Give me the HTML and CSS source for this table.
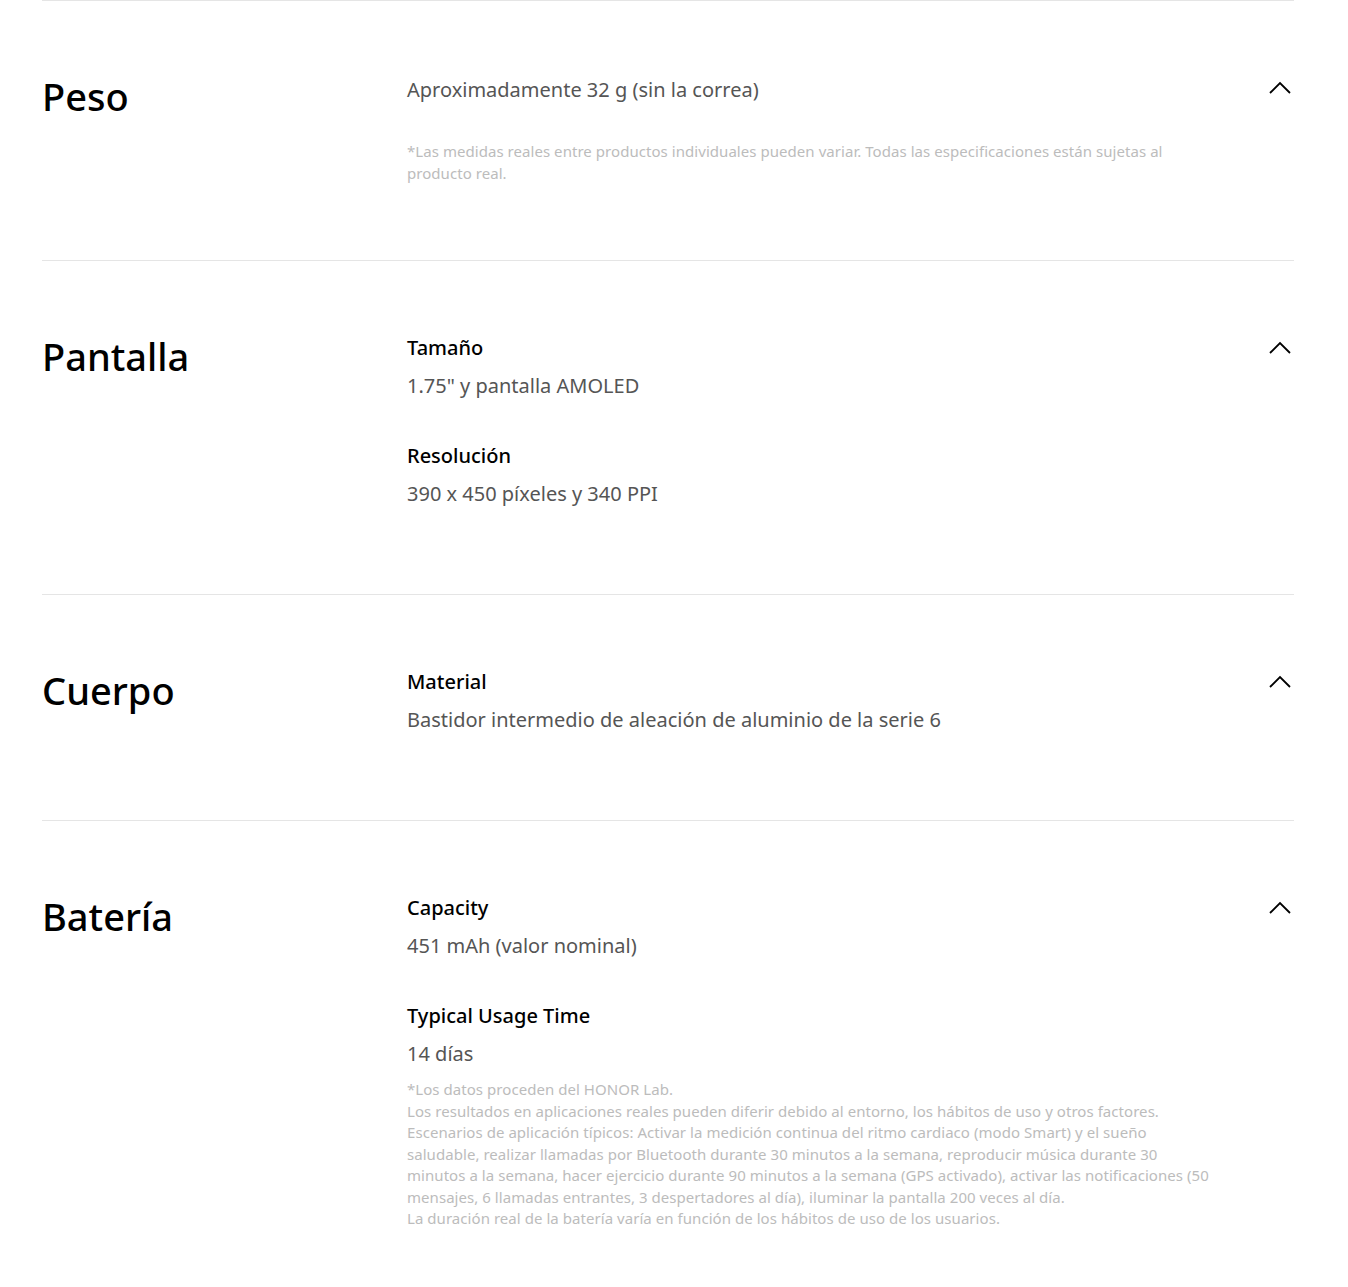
FILE: index.html
```html
<!DOCTYPE html>
<html lang="es">
<head>
    <meta charset="UTF-8">
    <meta name="viewport" content="width=device-width, initial-scale=1.0">
    <title>Especificaciones</title>
    <link rel="stylesheet" href="styles.css">
</head>
<body>
    <main class="specs">
        <section class="spec-row">
            <h2 class="spec-title">Peso</h2>
            <div class="spec-body">
                <p class="spec-value">Aproximadamente 32 g (sin la correa)</p>
                <p class="spec-note spec-note--spaced">*Las medidas reales entre productos individuales pueden variar. Todas las especificaciones están sujetas al producto real.</p>
            </div>
            <button class="spec-toggle" aria-label="Contraer">
                <svg width="24" height="16" viewBox="0 0 24 16"><path d="M2 13 L12 3 L22 13" fill="none" stroke="#000" stroke-width="1.8"/></svg>
            </button>
        </section>

        <section class="spec-row">
            <h2 class="spec-title">Pantalla</h2>
            <div class="spec-body">
                <div class="spec-item">
                    <h3 class="spec-label">Tamaño</h3>
                    <p class="spec-value">1.75" y pantalla AMOLED</p>
                </div>
                <div class="spec-item">
                    <h3 class="spec-label">Resolución</h3>
                    <p class="spec-value">390 x 450 píxeles y 340 PPI</p>
                </div>
            </div>
            <button class="spec-toggle" aria-label="Contraer">
                <svg width="24" height="16" viewBox="0 0 24 16"><path d="M2 13 L12 3 L22 13" fill="none" stroke="#000" stroke-width="1.8"/></svg>
            </button>
        </section>

        <section class="spec-row">
            <h2 class="spec-title">Cuerpo</h2>
            <div class="spec-body">
                <div class="spec-item">
                    <h3 class="spec-label">Material</h3>
                    <p class="spec-value">Bastidor intermedio de aleación de aluminio de la serie 6</p>
                </div>
            </div>
            <button class="spec-toggle" aria-label="Contraer">
                <svg width="24" height="16" viewBox="0 0 24 16"><path d="M2 13 L12 3 L22 13" fill="none" stroke="#000" stroke-width="1.8"/></svg>
            </button>
        </section>

        <section class="spec-row">
            <h2 class="spec-title">Batería</h2>
            <div class="spec-body">
                <div class="spec-item">
                    <h3 class="spec-label">Capacity</h3>
                    <p class="spec-value">451 mAh (valor nominal)</p>
                </div>
                <div class="spec-item">
                    <h3 class="spec-label">Typical Usage Time</h3>
                    <p class="spec-value">14 días</p>
                </div>
                <p class="spec-note">*Los datos proceden del HONOR Lab.<br>
                    Los resultados en aplicaciones reales pueden diferir debido al entorno, los hábitos de uso y otros factores.<br>
                    Escenarios de aplicación típicos: Activar la medición continua del ritmo cardiaco (modo Smart) y el sueño saludable, realizar llamadas por Bluetooth durante 30 minutos a la semana, reproducir música durante 30 minutos a la semana, hacer ejercicio durante 90 minutos a la semana (GPS activado), activar las notificaciones (50 mensajes, 6 llamadas entrantes, 3 despertadores al día), iluminar la pantalla 200 veces al día.<br>
                    La duración real de la batería varía en función de los hábitos de uso de los usuarios.</p>
            </div>
            <button class="spec-toggle" aria-label="Contraer">
                <svg width="24" height="16" viewBox="0 0 24 16"><path d="M2 13 L12 3 L22 13" fill="none" stroke="#000" stroke-width="1.8"/></svg>
            </button>
        </section>
    </main>
</body>
</html>
```

FILE: styles.css
```css
* {
    margin: 0;
    padding: 0;
    box-sizing: border-box;
}

body {
    font-family: 'Noto Sans', 'Open Sans', sans-serif;
    background-color: #fff;
    color: #000;
}

/* 사양 목록 */
.specs {
    width: 1252px;
    margin: 0 0 0 42px;
}

.spec-row {
    display: flex;
    align-items: flex-start;
    border-top: 1px solid #e5e5e5;
    padding: 69px 0 80px;
}

.spec-row:last-child {
    padding-bottom: 56px;
}

.spec-title {
    width: 365px;
    flex-shrink: 0;
    font-size: 38px;
    font-weight: 500;
    line-height: 52px;
}

.spec-body {
    flex: 1;
    max-width: 812px;
}

.spec-item + .spec-item {
    margin-top: 32px;
}

.spec-label {
    font-size: 20px;
    font-weight: 500;
    line-height: 36px;
}

.spec-value {
    font-size: 20px;
    font-weight: 400;
    color: #555;
    line-height: 40px;
}

.spec-note {
    font-size: 15px;
    letter-spacing: 0.05px;
    color: #bcbcbc;
    line-height: 21.5px;
    margin-top: 5px;
}

/* 단독 값 아래 각주 */
.spec-note--spaced {
    margin-top: 31px;
    margin-bottom: -4px;
}

.spec-toggle {
    margin-left: auto;
    margin-right: 2px;
    margin-top: 10px;
    background: none;
    border: none;
    width: 24px;
    height: 16px;
    display: block;
}

.spec-toggle svg {
    display: block;
}
```
